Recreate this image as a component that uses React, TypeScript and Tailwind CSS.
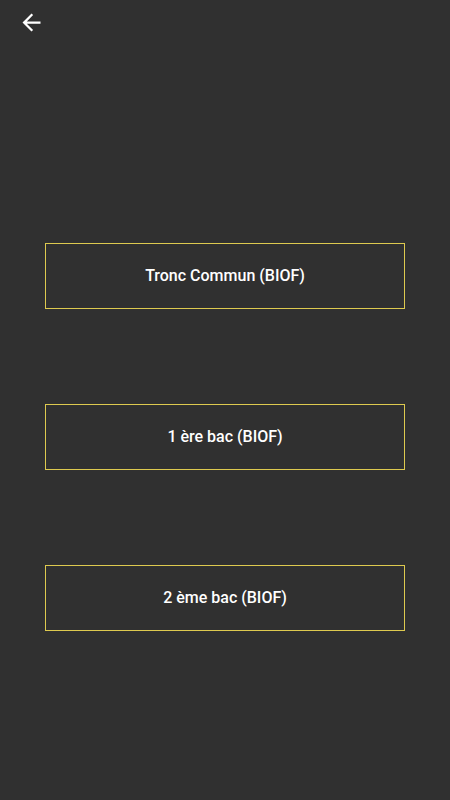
import React from 'react'

const levels = ['Tronc Commun (BIOF)', '1 ère bac (BIOF)', '2 ème bac (BIOF)']

function BackIcon() {
    return (
        <svg width={27} height={27} viewBox="0 0 24 24" fill="white">
            <path d="M20 11H7.83l5.59-5.59L12 4l-8 8 8 8 1.41-1.41L7.83 13H20v-2z" />
        </svg>
    )
}

export default function App() {
    return (
        <div
            className="w-[450px] h-[800px] bg-[#303030] flex flex-col"
            style={{ fontFamily: 'Roboto, "Liberation Sans", sans-serif' }}
        >
            <div className="h-[43px] flex items-center pl-[18px] pt-[1px]">
                <BackIcon />
            </div>
            <div className="flex flex-col px-[45px] pt-[200px] gap-[95px]">
                {levels.map((level) => (
                    <div
                        key={level}
                        className="h-[66px] border border-[#ddc94f] flex items-center justify-center text-white text-[16px] font-medium"
                    >
                        {level}
                    </div>
                ))}
            </div>
        </div>
    )
}
